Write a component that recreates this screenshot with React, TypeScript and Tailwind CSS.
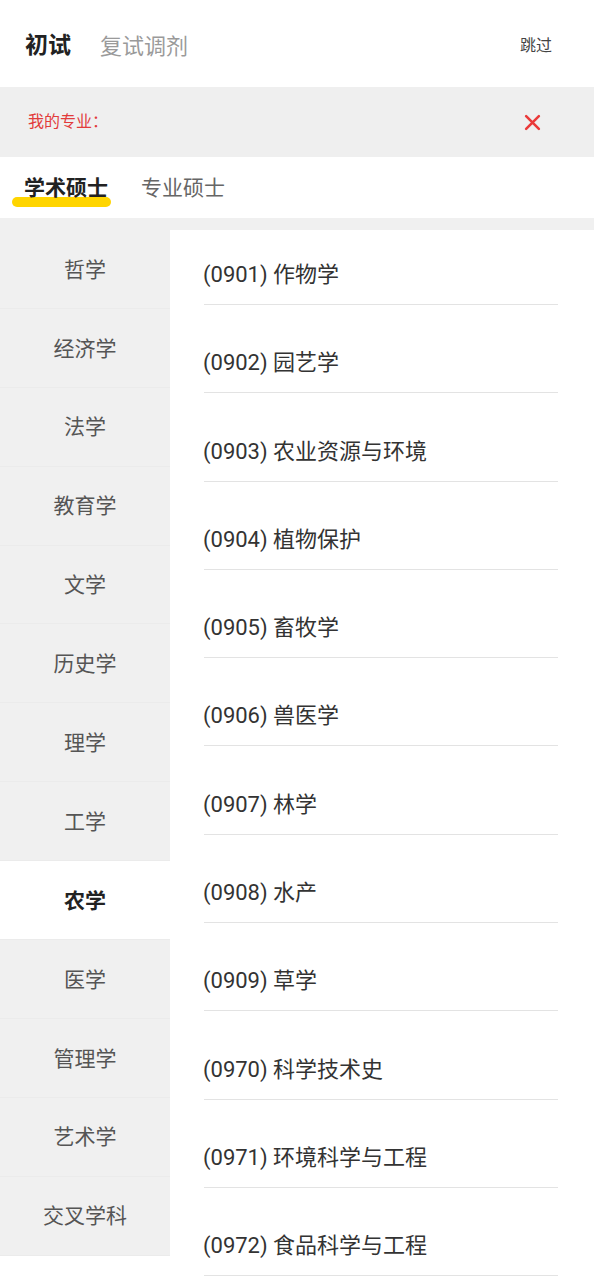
import { useState } from "react";

const categories = [
  "哲学",
  "经济学",
  "法学",
  "教育学",
  "文学",
  "历史学",
  "理学",
  "工学",
  "农学",
  "医学",
  "管理学",
  "艺术学",
  "交叉学科",
];

const majors = [
  "(0901) 作物学",
  "(0902) 园艺学",
  "(0903) 农业资源与环境",
  "(0904) 植物保护",
  "(0905) 畜牧学",
  "(0906) 兽医学",
  "(0907) 林学",
  "(0908) 水产",
  "(0909) 草学",
  "(0970) 科学技术史",
  "(0971) 环境科学与工程",
  "(0972) 食品科学与工程",
];

export default function App() {
  const [active, setActive] = useState("农学");
  const [tab, setTab] = useState(0);

  return (
    <div
      className="w-[594px] h-[1280px] overflow-hidden bg-white"
      style={{ fontFamily: 'Roboto, "Noto Sans CJK SC", sans-serif' }}
    >
      {/* Top header */}
      <div className="h-[87px] flex items-center pt-[5px] pl-[25px] pr-[42px]">
        <span className="text-[23px] font-bold text-[#222]">初试</span>
        <span className="ml-[29px] text-[22px] text-[#9a9a9a]">复试调剂</span>
        <span className="ml-auto text-[16px] text-[#444]">跳过</span>
      </div>

      {/* My major bar */}
      <div className="h-[70px] bg-[#efefef] flex items-center pl-[28px] pr-[53px]">
        <span className="text-[16px] text-[#e23b3b]">我的专业：</span>
        <svg className="ml-auto" width="17" height="17" viewBox="0 0 16 16">
          <path d="M2 2 L14 14 M14 2 L2 14" stroke="#ea3a3a" strokeWidth="2.4" strokeLinecap="round" />
        </svg>
      </div>

      {/* Tabs */}
      <div className="h-[61px] flex items-center pl-[24px] gap-[33px]">
        {["学术硕士", "专业硕士"].map((t, i) => (
          <button
            key={t}
            onClick={() => setTab(i)}
            className={`relative text-[21px] leading-[28px] ${
              tab === i ? "font-bold text-[#222]" : "text-[#666]"
            }`}
          >
            {tab === i && (
              <span className="absolute left-[-12px] right-[-3px] top-[23px] h-[10px] rounded-full bg-[#ffd500]" />
            )}
            <span className="relative">{t}</span>
          </button>
        ))}
      </div>

      {/* Body */}
      <div className="flex bg-[#f0f0f0] pt-[12px] h-[1062px]">
        <div className="w-[170px] flex flex-col">
          {categories.map((c) => (
            <button
              key={c}
              onClick={() => setActive(c)}
              className={`h-[78.9px] shrink-0 flex items-center justify-center pt-[3px] text-[21px] border-b border-[#ebebeb] ${
                active === c ? "bg-white font-bold text-[#222]" : "bg-[#f0f0f0] text-[#555]"
              }`}
            >
              {c}
            </button>
          ))}
          <div className="flex-1 bg-white" />
        </div>
        <div className="flex-1 bg-white">
          {majors.map((m) => (
            <div
              key={m}
              className="ml-[34px] mr-[36px] pt-[44.3px] first:pt-[31px] pb-[15px] border-b border-[#e3e3e3]"
            >
              <div className="text-[22px] leading-[28px] text-[#333] -ml-[1px]">{m}</div>
            </div>
          ))}
        </div>
      </div>
    </div>
  );
}
